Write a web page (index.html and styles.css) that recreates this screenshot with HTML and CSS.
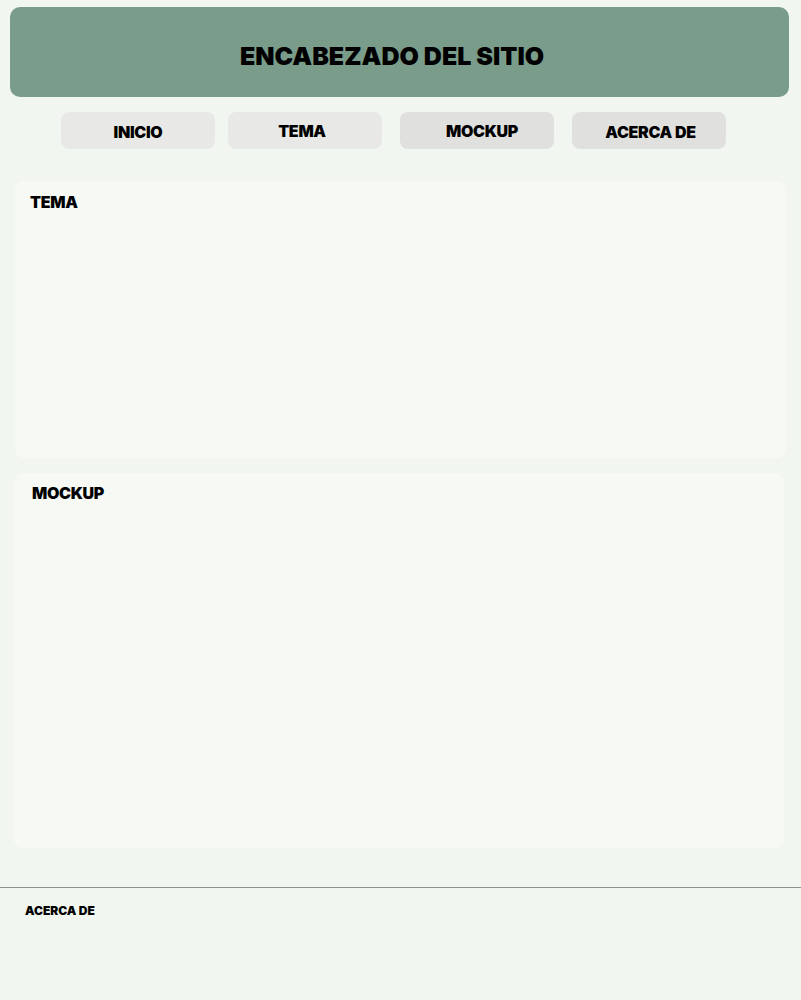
FILE: index.html
```html
<!DOCTYPE html>
<html lang="es">
<head>
<meta charset="utf-8">
<title>Encabezado del sitio</title>
<link rel="stylesheet" href="styles.css">
</head>
<body>
<header class="site-header">
  <h1 class="site-title">ENCABEZADO DEL SITIO</h1>
</header>
<nav class="main-nav">
  <a class="nav-btn" href="#">INICIO</a>
  <a class="nav-btn nav-btn--near" href="#">TEMA</a>
  <a class="nav-btn nav-btn--dark nav-btn--shift" href="#">MOCKUP</a>
  <a class="nav-btn nav-btn--dark nav-btn--low" href="#">ACERCA DE</a>
</nav>
<main class="content">
  <section class="panel panel--tema">
    <h2 class="panel-title">TEMA</h2>
  </section>
  <section class="panel panel--mockup">
    <h2 class="panel-title">MOCKUP</h2>
  </section>
</main>
<footer class="site-footer">
  <p class="footer-title">ACERCA DE</p>
</footer>
</body>
</html>
```

FILE: styles.css
```css
* { box-sizing: border-box; }
html, body {
  margin: 0;
  padding: 0;
}
body {
  background: #f2f6f0;
  font-family: "Inter", "Liberation Sans", sans-serif;
  color: #000;
  min-height: 1000px;
}
.site-header {
  margin: 7px 12px 0 10px;
  height: 90px;
  background: #7a9c8a;
  border-radius: 10px;
  display: flex;
  align-items: center;
  justify-content: center;
  padding-right: 15px;
}
.site-title {
  margin: 0;
  padding-top: 8px;
  font-size: 25px;
  font-weight: 900;
  letter-spacing: 0;
}
.main-nav {
  display: flex;
  gap: 18px;
  padding-left: 61px;
  margin-top: 15px;
}
.nav-btn {
  width: 154px;
  height: 37px;
  border-radius: 8px;
  background: #e8e9e6;
  color: #000;
  text-decoration: none;
  font-size: 16px;
  font-weight: 900;
  display: flex;
  align-items: center;
  justify-content: center;
  padding-top: 2px;
  letter-spacing: -0.3px;
}
.nav-btn--near { margin-left: -5px; padding-top: 0; padding-right: 6px; }
.nav-btn--dark { background: #e0e1df; padding-top: 0; }
.nav-btn--shift { padding-left: 10px; }
.nav-btn--low { padding-top: 3px; padding-left: 3px; }
.content {
  display: flex;
  flex-direction: column;
  gap: 15px;
  margin-top: 32px;
}
.panel {
  background: #f7f9f5;
  border-radius: 9px;
}
.panel--tema {
  margin: 0 15px 0 15px;
  height: 277px;
  padding: 11px 15px;
}
.panel--mockup {
  margin: 0 17px 0 14px;
  height: 375px;
  padding: 10px 18px;
}
.panel-title {
  margin: 0;
  font-size: 16px;
  font-weight: 900;
  line-height: 20px;
  letter-spacing: -0.3px;
}
.site-footer {
  margin-top: 39px;
  border-top: 1px solid #8e938e;
  padding: 15px 25px;
}
.footer-title {
  margin: 0;
  font-size: 12px;
  font-weight: 900;
  line-height: 16px;
  letter-spacing: 0;
}
```
